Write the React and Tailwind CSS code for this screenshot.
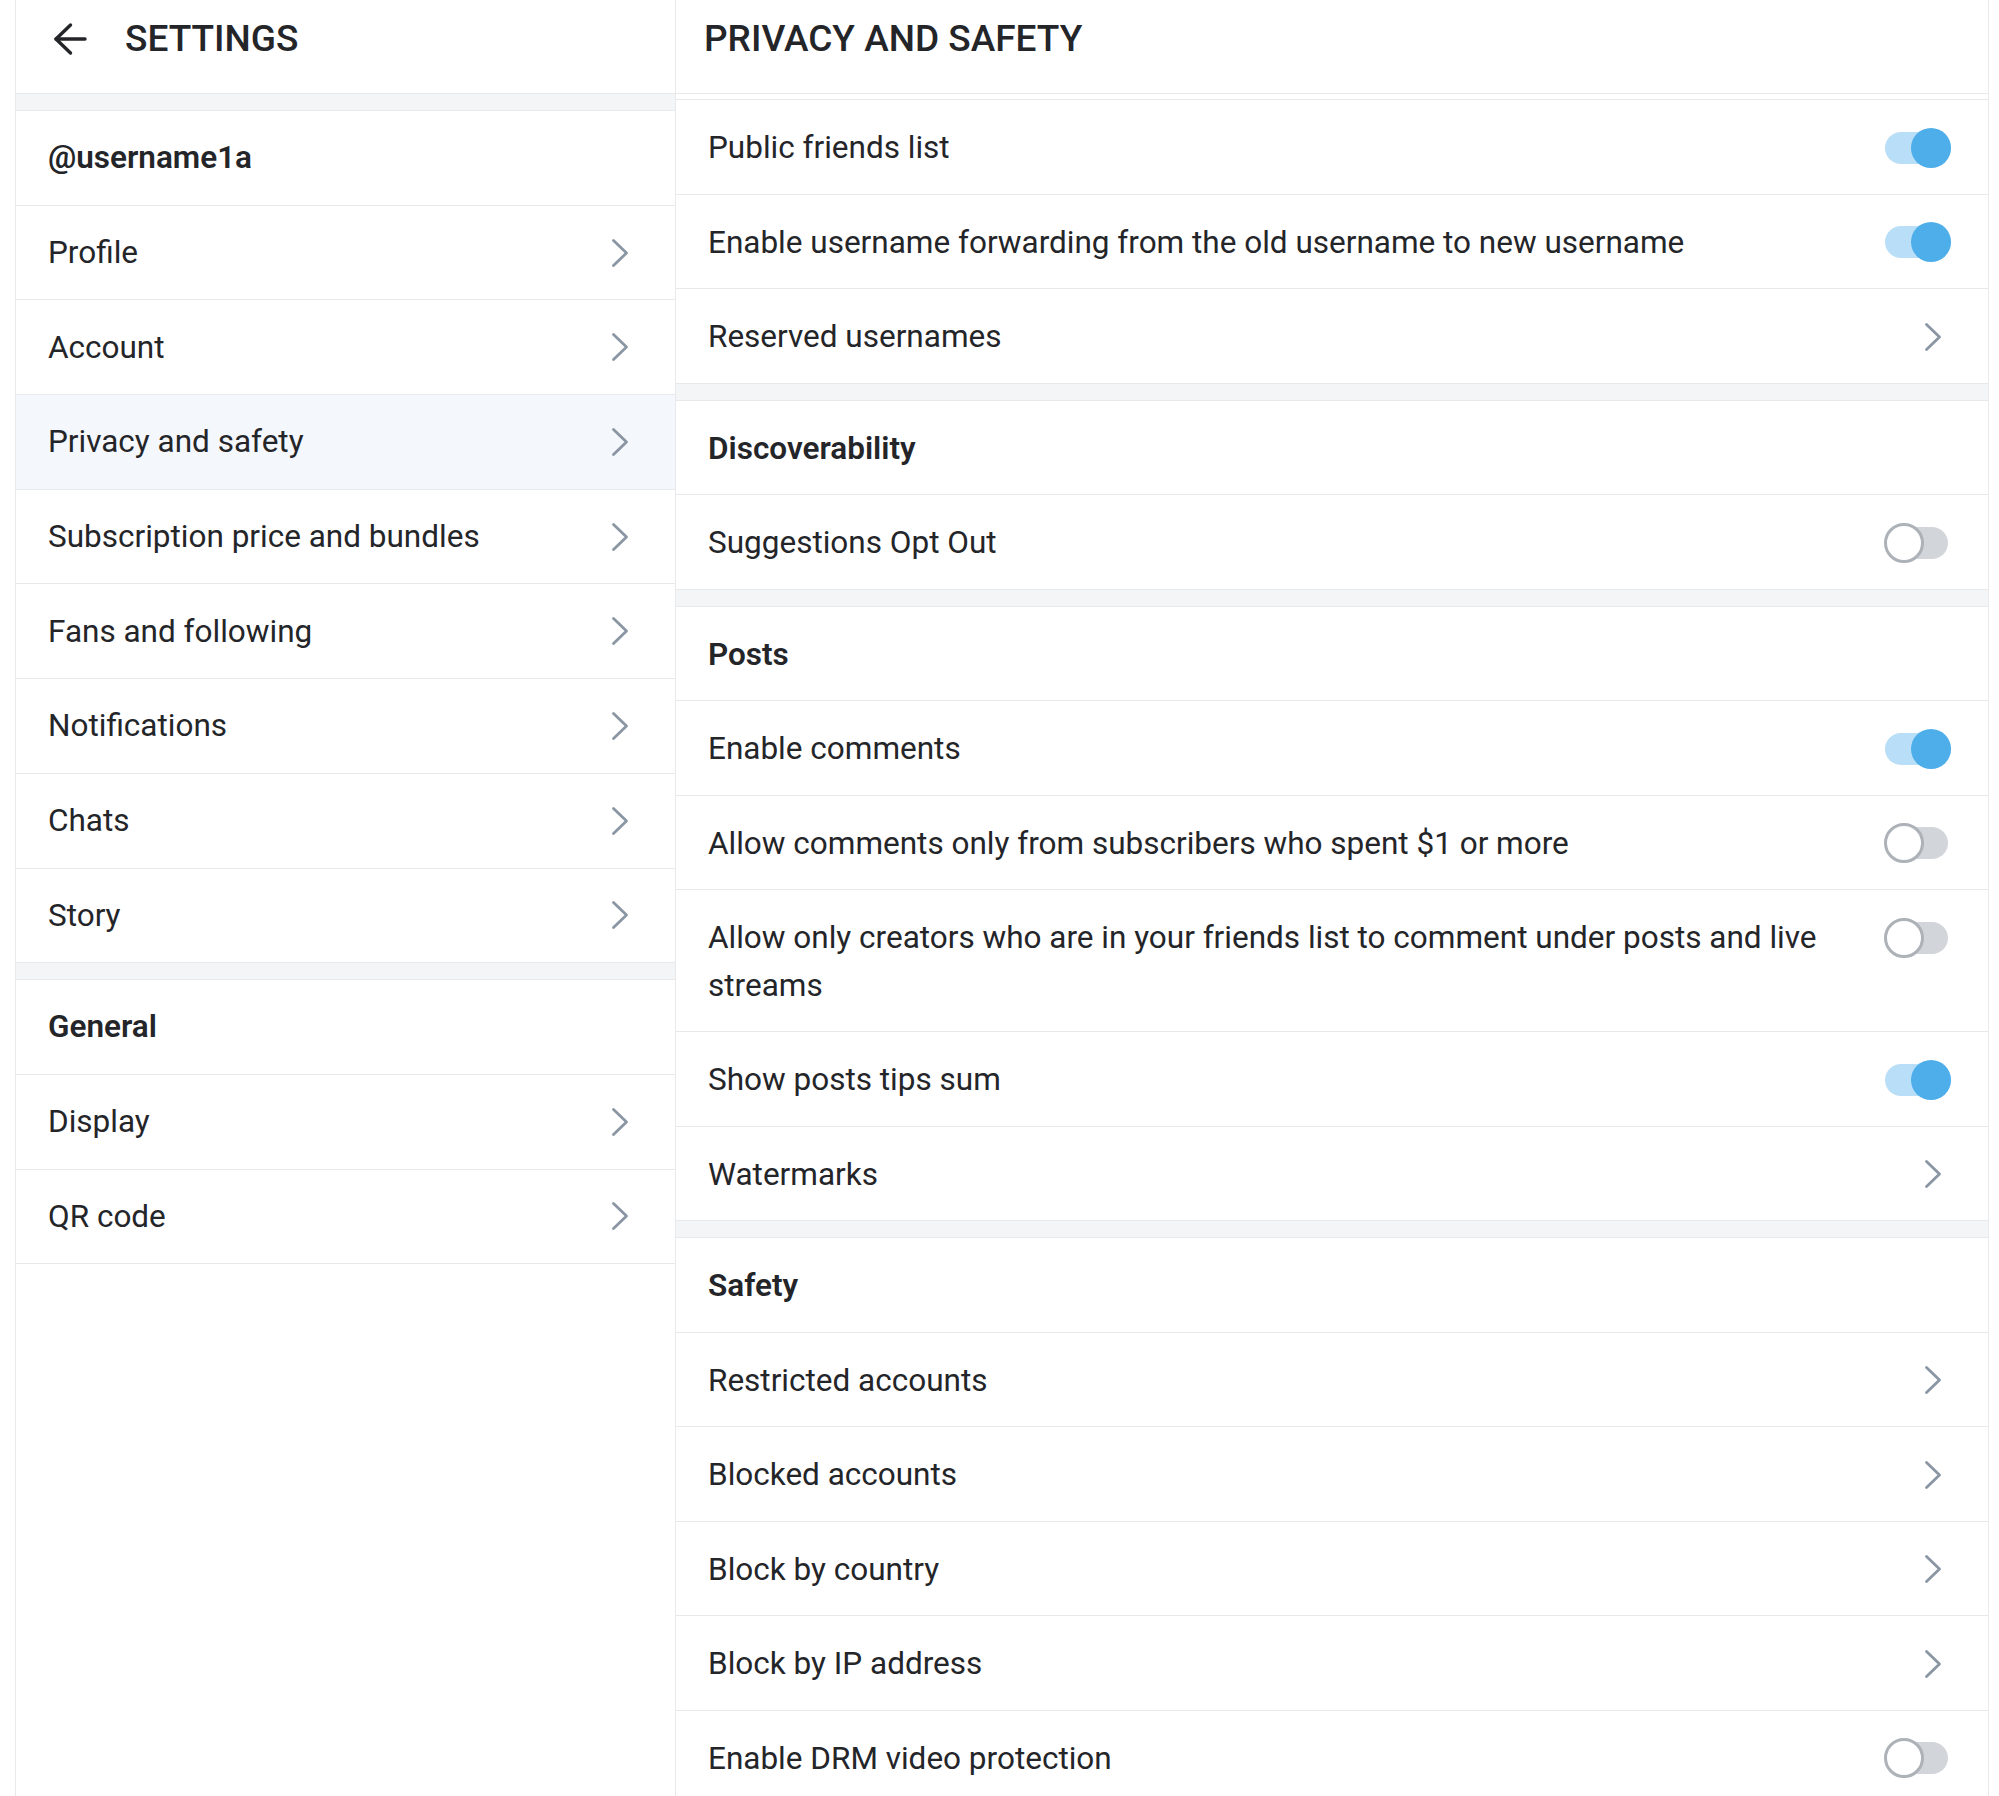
import React from "react";

const FONT = { fontFamily: "Roboto, 'Noto Sans', Arial, sans-serif" };

function Chevron() {
  return (
    <svg width="18" height="30" viewBox="0 0 18 30" fill="none" className="shrink-0">
      <path d="M2.5 2.5 L15.5 15 L2.5 27.5" stroke="#8a96a3" strokeWidth="2.8" strokeLinecap="round" strokeLinejoin="round" />
    </svg>
  );
}

function Toggle({ on }) {
  return (
    <div className="relative w-[67px] h-[40px] shrink-0">
      <div
        className={
          on
            ? "absolute left-[1px] right-[0px] top-[4px] h-[32px] rounded-full bg-[#b9def7]"
            : "absolute left-[4px] right-[3px] top-[4px] h-[32px] rounded-full bg-[#d2d5d9]"
        }
      />
      {on ? (
        <div className="absolute right-0 top-0 w-[40px] h-[40px] rounded-full bg-[#4eaeea]" />
      ) : (
        <div className="absolute left-0 top-0 w-[40px] h-[40px] rounded-full bg-white border-[3px] border-[#acb2b8]" />
      )}
    </div>
  );
}

function Band() {
  return <div className="h-[17px] bg-[#f4f5f7] border-b border-[#e7e9eb]" />;
}

function SideRow({ label, active, bold, chevron = true }) {
  return (
    <div
      className={
        "flex items-center justify-between h-[94.7px] pl-[32px] pr-[46px] border-b border-[#e7e9eb] " +
        (active ? "bg-[#f4f7fb]" : "bg-white")
      }
    >
      <span className={"text-[31.5px] text-[#242529] " + (bold ? "font-semibold" : "")}>{label}</span>
      {chevron && <Chevron />}
    </div>
  );
}

function MainRow({ label, right, bold }) {
  return (
    <div className="flex items-start justify-between gap-[40px] pt-[24px] pb-[22px] pl-[32px] pr-[37px] border-b border-[#e7e9eb] bg-white">
      <span className={"flex-1 min-w-0 text-[31.5px] leading-[47.5px] text-[#242529] " + (bold ? "font-semibold" : "")}>
        {label}
      </span>
      {right === "on" && (
        <div className="h-[47.5px] flex items-center">
          <Toggle on />
        </div>
      )}
      {right === "off" && (
        <div className="h-[47.5px] flex items-center">
          <Toggle on={false} />
        </div>
      )}
      {right === "chev" && (
        <div className="h-[47.5px] flex items-center pr-[9px]">
          <Chevron />
        </div>
      )}
    </div>
  );
}

export default function App() {
  return (
    <div className="min-h-[1796px] bg-white" style={FONT}>
      <div className="ml-[15px] w-[1974px] min-h-[1796px] border-x border-[#e7e9eb] flex">
        {/* Sidebar */}
        <div className="w-[660px] shrink-0 border-r border-[#e7e9eb]">
          <div className="h-[94px] flex items-center pl-[36px] pb-[15px] border-b border-[#e7e9eb]">
            <svg width="36" height="34" viewBox="0 0 36 34" fill="none" stroke="#242529" strokeWidth="3.4" strokeLinecap="round" strokeLinejoin="round">
              <path d="M4 17 H33" />
              <path d="M18.5 3 L4 17 L18.5 31" />
            </svg>
            <span className="ml-[37px] text-[37px] font-medium text-[#242529]">SETTINGS</span>
          </div>
          <Band />
          <SideRow label="@username1a" bold chevron={false} />
          <SideRow label="Profile" />
          <SideRow label="Account" />
          <SideRow label="Privacy and safety" active />
          <SideRow label="Subscription price and bundles" />
          <SideRow label="Fans and following" />
          <SideRow label="Notifications" />
          <SideRow label="Chats" />
          <SideRow label="Story" />
          <Band />
          <SideRow label="General" bold chevron={false} />
          <SideRow label="Display" />
          <SideRow label="QR code" />
        </div>

        {/* Main */}
        <div className="flex-1 min-w-0">
          <div className="h-[94px] flex items-center pl-[28px] pb-[15px] border-b border-[#e7e9eb]">
            <span className="text-[37px] font-medium text-[#242529]">PRIVACY AND SAFETY</span>
          </div>
          <div className="h-[6px] border-b border-[#e7e9eb]" />
          <MainRow label="Public friends list" right="on" />
          <MainRow label="Enable username forwarding from the old username to new username" right="on" />
          <MainRow label="Reserved usernames" right="chev" />
          <Band />
          <MainRow label="Discoverability" bold />
          <MainRow label="Suggestions Opt Out" right="off" />
          <Band />
          <MainRow label="Posts" bold />
          <MainRow label="Enable comments" right="on" />
          <MainRow label="Allow comments only from subscribers who spent $1 or more" right="off" />
          <MainRow
            label="Allow only creators who are in your friends list to comment under posts and live streams"
            right="off"
          />
          <MainRow label="Show posts tips sum" right="on" />
          <MainRow label="Watermarks" right="chev" />
          <Band />
          <MainRow label="Safety" bold />
          <MainRow label="Restricted accounts" right="chev" />
          <MainRow label="Blocked accounts" right="chev" />
          <MainRow label="Block by country" right="chev" />
          <MainRow label="Block by IP address" right="chev" />
          <MainRow label="Enable DRM video protection" right="off" />
        </div>
      </div>
    </div>
  );
}
